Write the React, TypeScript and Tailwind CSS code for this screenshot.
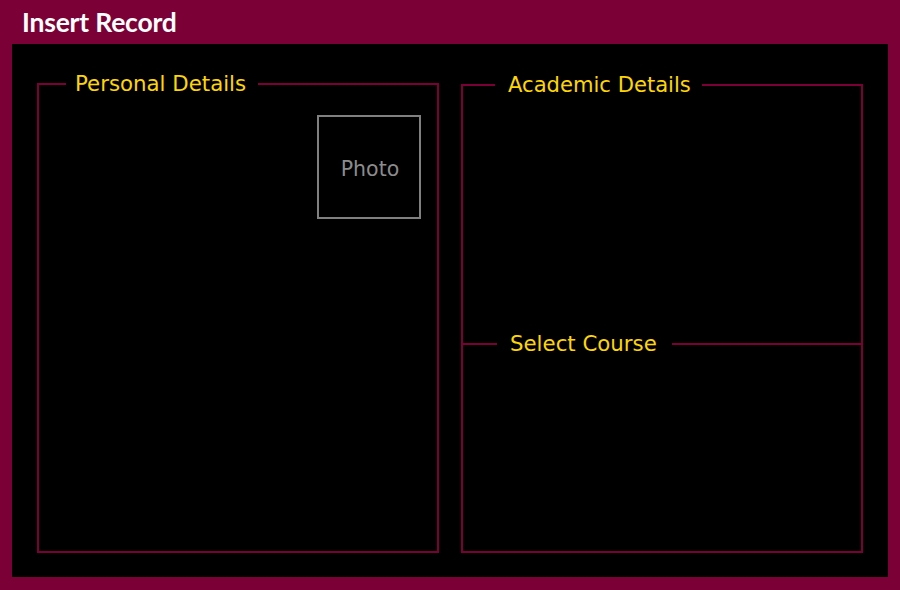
export default function App() {
  return (
    <div className="w-[900px] h-[590px] bg-[#7b0036] flex flex-col px-3 pb-[13px]">
      {/* header */}
      <div className="h-[44px] flex items-center pl-[10px]">
        <h1 className="text-white font-bold text-[26.5px] tracking-[-0.2px] leading-none font-['Lato',sans-serif]">
          Insert Record
        </h1>
      </div>

      {/* form body */}
      <div className="flex-1 bg-black flex gap-[22px] px-[25px] pt-[28px] pb-[24px] font-['DejaVu_Sans',sans-serif]">
        <fieldset className="w-[402px] shrink-0 border-2 border-[#7b0036] px-0 pb-4 m-0 min-w-0">
          <legend className="ml-[27px] pl-[9px] pr-[12px] text-[21.3px] leading-[24px] text-[#ffd700]">
            Personal Details
          </legend>
          <div className="flex justify-end pt-[19px] pr-[16px]">
            <div className="w-[104px] h-[104px] border-2 border-[#808080] flex items-center justify-center pt-[5px] pl-[2px] text-[20.5px] text-[#8c8c8c]">
              Photo
            </div>
          </div>
        </fieldset>

        <fieldset className="w-[402px] shrink-0 border-2 border-[#7b0036] m-0 mt-[1px] p-0 min-w-0 flex flex-col">
          <legend className="ml-[32px] pl-[13px] pr-[11px] text-[21.1px] leading-[24px] text-[#ffd700]">
            Academic Details
          </legend>
          <div className="h-[235px]" />
          <fieldset className="border-0 border-t-2 border-[#7b0036] m-0 p-0 flex-1">
            <legend className="ml-[34px] pl-[13px] pr-[15px] text-[21.3px] leading-[24px] text-[#ffd700]">
              Select Course
            </legend>
          </fieldset>
        </fieldset>
      </div>
    </div>
  );
}
